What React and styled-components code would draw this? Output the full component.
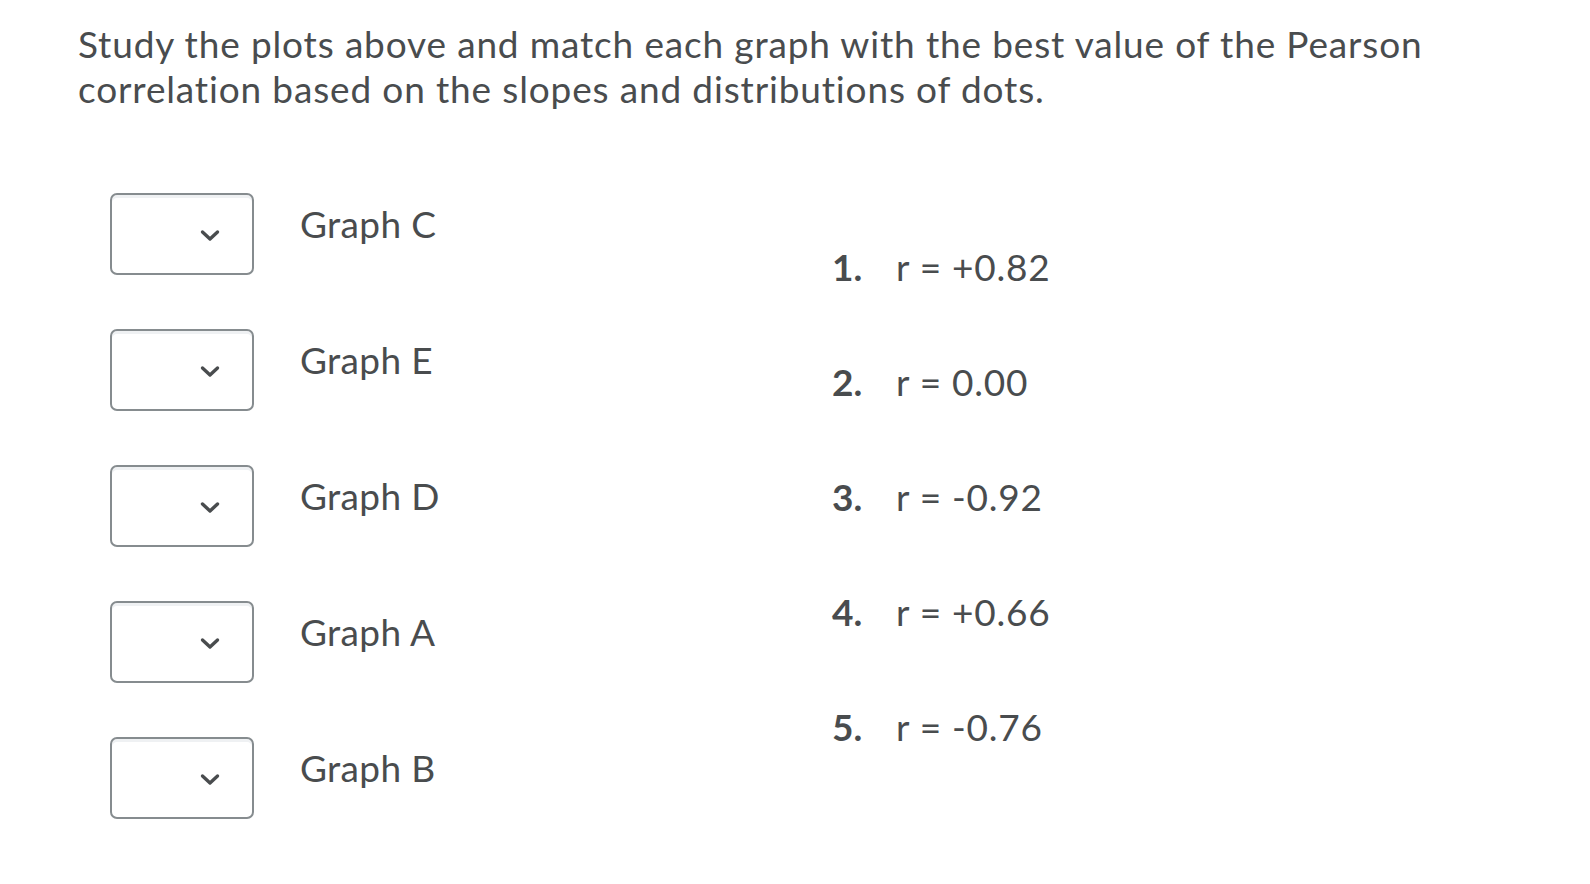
import React from 'react';
import styled, { createGlobalStyle } from 'styled-components';

const Global = createGlobalStyle`
  html, body { margin: 0; padding: 0; background: #ffffff; }
  body {
    font-family: Lato, "Noto Sans", "Liberation Sans", sans-serif;
    color: #494c4e;
  }
`;

const Page = styled.main`
  padding: 21px 0 0 78px;
`;

const Prompt = styled.p`
  margin: 0;
  width: 1420px;
  font-size: 37px;
  letter-spacing: 0.85px;
  line-height: 45px;
`;

const Matching = styled.div`
  display: flex;
  margin-top: 82px;
  margin-left: 32px;
`;

const Choices = styled.div`
  display: flex;
  flex-direction: column;
  gap: 54px;
  width: 722px;
`;

const Row = styled.div`
  display: flex;
  align-items: flex-start;
  gap: 46px;
  height: 82px;
`;

const SelectBox = styled.div`
  box-sizing: border-box;
  width: 144px;
  height: 82px;
  border: 2px solid #868c8f;
  border-radius: 7px;
  background: #ffffff;
  box-shadow: inset 0 3px 0 0 #eff1f3;
  display: flex;
  align-items: center;
  justify-content: flex-end;
  padding: 2px 32px 0 0;
`;

const Label = styled.span`
  font-size: 37px;
  letter-spacing: 0.35px;
  line-height: 45px;
  padding-top: 8px;
`;

const Answers = styled.ol`
  list-style: none;
  margin: 0;
  padding: 51px 0 0 0;
  display: flex;
  flex-direction: column;
  gap: 70px;
`;

const Answer = styled.li`
  display: flex;
  align-items: baseline;
  font-size: 37px;
  letter-spacing: 0.75px;
  line-height: 45px;
`;

const Num = styled.span`
  width: 64px;
  font-weight: 700;
  letter-spacing: 0;
`;

const Chevron = () => (
  <svg width="20" height="13" viewBox="0 0 20 13" aria-hidden="true">
    <path d="M2.5 3 L10 10 L17.5 3" fill="none" stroke="#494c4e" strokeWidth="3.4" strokeLinecap="round" strokeLinejoin="round" />
  </svg>
);

const graphs = ['Graph C', 'Graph E', 'Graph D', 'Graph A', 'Graph B'];
const values = ['r = +0.82', 'r = 0.00', 'r = -0.92', 'r = +0.66', 'r = -0.76'];

export default function App() {
  return (
    <>
      <Global />
      <Page>
        <Prompt>
          Study the plots above and match each graph with the best value of the Pearson correlation based on the slopes and distributions of dots.
        </Prompt>
        <Matching>
          <Choices>
            {graphs.map((g) => (
              <Row key={g}>
                <SelectBox>
                  <Chevron />
                </SelectBox>
                <Label>{g}</Label>
              </Row>
            ))}
          </Choices>
          <Answers>
            {values.map((v, i) => (
              <Answer key={v}>
                <Num>{i + 1}.</Num>
                <span>{v}</span>
              </Answer>
            ))}
          </Answers>
        </Matching>
      </Page>
    </>
  );
}
